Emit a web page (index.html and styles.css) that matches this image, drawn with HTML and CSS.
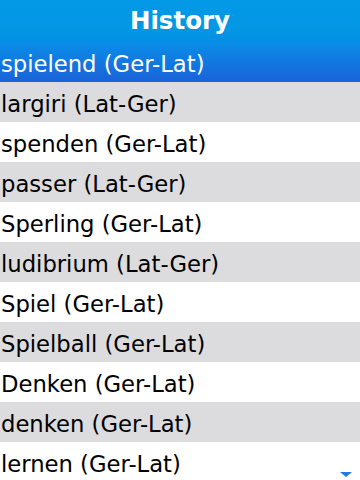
FILE: index.html
```html
<!DOCTYPE html>
<html>
<head>
<meta charset="utf-8">
<link rel="stylesheet" href="styles.css">
</head>
<body>
<div class="screen">
  <div class="header">History</div>
  <ul class="list">
    <li class="row selected">spielend (Ger-Lat)</li>
    <li class="row alt">largiri (Lat-Ger)</li>
    <li class="row">spenden (Ger-Lat)</li>
    <li class="row alt">passer (Lat-Ger)</li>
    <li class="row">Sperling (Ger-Lat)</li>
    <li class="row alt">ludibrium (Lat-Ger)</li>
    <li class="row">Spiel (Ger-Lat)</li>
    <li class="row alt">Spielball (Ger-Lat)</li>
    <li class="row">Denken (Ger-Lat)</li>
    <li class="row alt">denken (Ger-Lat)</li>
    <li class="row">lernen (Ger-Lat)</li>
  </ul>
  <div class="more"></div>
</div>
</body>
</html>
```
FILE: styles.css
```css
html, body {
  margin: 0;
  padding: 0;
  background: #ffffff;
}
.screen {
  position: relative;
  width: 360px;
  height: 480px;
  overflow: hidden;
  font-family: "DejaVu Sans", sans-serif;
}
.header {
  height: 42px;
  background: linear-gradient(#0399e6, #0397e4 70%, #058ee6);
  color: #ffffff;
  font-weight: bold;
  font-size: 24.5px;
  line-height: 42px;
  text-align: center;
}
.list {
  list-style: none;
  margin: 0;
  padding: 0;
}
.row {
  height: 36px;
  padding-top: 4px;
  line-height: 36px;
  padding-left: 1px;
  font-size: 22.7px;
  color: #000000;
  background: #ffffff;
  white-space: nowrap;
}
.row.alt {
  background: #dcdbde;
}
.row.selected {
  background: linear-gradient(#0a8ee8, #1a62d8);
  color: #ffffff;
}
.more {
  position: absolute;
  right: 8px;
  bottom: 3px;
  width: 0;
  height: 0;
  border-left: 6px solid transparent;
  border-right: 6px solid transparent;
  border-top: 5px solid #1e7be0;
}
```
